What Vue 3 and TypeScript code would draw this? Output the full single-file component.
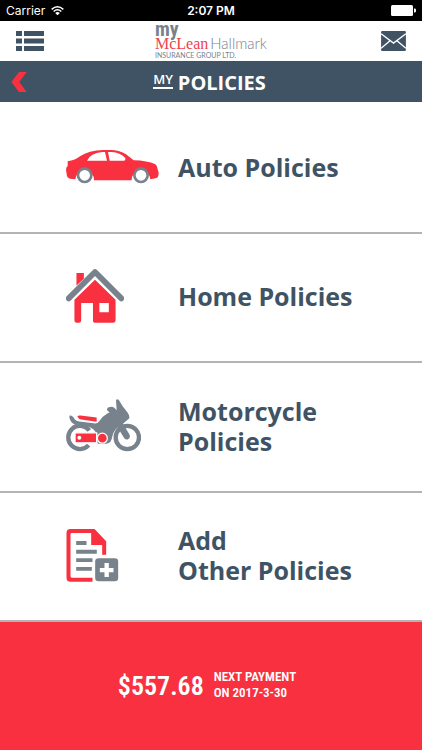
<script setup lang="ts">
type PolicyKind = 'auto' | 'home' | 'motorcycle' | 'add'

interface Policy {
  kind: PolicyKind
  label: string
}

const policies: Policy[] = [
  { kind: 'auto', label: 'Auto Policies' },
  { kind: 'home', label: 'Home Policies' },
  { kind: 'motorcycle', label: 'Motorcycle\nPolicies' },
  { kind: 'add', label: 'Add\nOther Policies' },
]
</script>

<template>
  <div class="screen">
    <div class="status">
      <div class="carrier">
        <span>Carrier</span>
        <svg class="wifi" viewBox="0 0 39 30" aria-hidden="true">
          <path d="M2 10Q19.500-5 37 10" fill="none" stroke="#fff" stroke-width="4.500" />
          <path d="M8 16.500Q19.500 6.500 31 16.500" fill="none" stroke="#fff" stroke-width="4.500" />
          <path d="M12.500 21Q19.500 14.500 26.500 21L19.500 28Z" fill="#fff" />
        </svg>
      </div>
      <span class="clock">2:07 PM</span>
      <svg class="battery" viewBox="0 0 25 11" aria-hidden="true">
        <rect x="0" y="0" width="22" height="11" rx="1.500" fill="#fff" />
        <path d="M23 3.500h1q1 0 1 2t-1 2h-1z" fill="#fff" />
      </svg>
    </div>

    <header class="header">
      <button class="icon-button" type="button" aria-label="Menu">
        <svg class="menu" viewBox="0 0 28 20" aria-hidden="true">
          <path d="M0 0h6v5H0zM8 0h20v5H8zM0 7.500h6v5H0zM8 7.500h20v5H8zM0 15h6v5H0zM8 15h20v5H8z" fill="#405364" />
        </svg>
      </button>
      <div class="logo">
        <span class="logo-my">my</span>
        <span class="logo-name"><span class="logo-red">McLean</span><span class="logo-grey">Hallmark</span></span>
        <span class="logo-sub">INSURANCE GROUP LTD.</span>
      </div>
      <button class="icon-button" type="button" aria-label="Messages">
        <svg class="mail" viewBox="0 0 72 58" aria-hidden="true">
          <rect width="72" height="58" rx="3" fill="#405364" />
          <path d="M0 8L36 35L72 8M0 50L26 28M72 50L46 28" fill="none" stroke="#fff" stroke-width="4" />
        </svg>
      </button>
    </header>

    <div class="title-bar">
      <button class="back" type="button" aria-label="Back">
        <svg viewBox="0 0 46 60" aria-hidden="true">
          <path d="M23 0H46L24 30L46 60H23L0 30Z" fill="#f8303f" />
        </svg>
      </button>
      <h1 class="title"><span class="title-my">MY</span><span>POLICIES</span></h1>
    </div>

    <main class="policies">
      <button v-for="policy in policies" :key="policy.kind" class="policy" type="button">
        <span class="policy-icon">
          <svg v-if="policy.kind === 'auto'" class="car" viewBox="0 0 279 102" aria-hidden="true">
            <path d="M5 34Q28 31 42 19Q68 1 112 0H134Q158 0 179 12L203 31Q244 32 268 43Q275 48 275 58L278 68Q278 83 269 85L253 88A28 28 0 0 0 197 91H84A28 28 0 0 0 28 88L12 86Q2 83 2 72L0 59Q0 52 5 48Z" fill="#f8303f" />
            <path d="M63 32Q73 9 109 6H117L123 32ZM126 6H137Q162 7 178 24Q180 29 175 32H131Z" fill="#fff" />
            <g fill="#fff" stroke="#78828c" stroke-width="8">
              <circle cx="56" cy="76" r="20" />
              <circle cx="225" cy="76" r="20" />
            </g>
          </svg>
          <svg v-else-if="policy.kind === 'home'" class="house" viewBox="0 0 172 160" aria-hidden="true">
            <path d="M31 12H53V29L31 49ZM25 91L86 32L147 91V153Q147 159 141 159H85Q80 159 80 154V101H45V153Q45 159 39 159H31Q25 159 25 153ZM99 101V128H127V101Z" fill="#f8303f" fill-rule="evenodd" />
            <path d="M8 87L86 9L164 87" fill="none" stroke="#78828c" stroke-width="17" stroke-linecap="round" stroke-linejoin="round" />
          </svg>
          <svg v-else-if="policy.kind === 'motorcycle'" class="motorcycle" viewBox="0 0 225 158" aria-hidden="true">
            <g fill="none" stroke="#78828c" stroke-width="13">
              <path d="M70 94A35 35 0 1 0 68 138" />
              <circle cx="184" cy="115" r="35" />
            </g>
            <path d="M11 49Q19 47 26 60Q30 66 40 67L88 73Q96 73 101 65Q108 52 124 43L131 39Q122 37 123 30Q125 23 138 23Q145 24 152 33L150 3Q153-2 159 3L170 21L184 39Q191 48 190 57L171 74L190 105Q195 117 185 121Q176 123 172 113L155 85Q143 94 139 111Q137 131 121 134H95L88 97Q76 80 47 78Q25 80 15 67Q8 58 11 49Z" fill="#78828c" />
            <path d="M34 52Q37 48 43 49L92 55V68L46 61Q38 60 34 52Z" fill="#f8303f" />
            <path d="M27 103Q27 101 29 101H92V131H29Q27 131 27 129Z" fill="#f8303f" stroke="#fff" stroke-width="4" />
            <circle cx="40" cy="116" r="6" fill="#fff" />
            <circle cx="109" cy="117" r="15" fill="#f8303f" stroke="#fff" stroke-width="4" />
          </svg>
          <svg v-else class="document" viewBox="0 0 156 159" aria-hidden="true">
            <path d="M12 0H84L119 37V77H107V48H74V12H16Q12 12 12 16V142Q12 146 16 146H78V158H12Q0 158 0 146V12Q0 0 12 0Z" fill="#f8303f" />
            <path d="M29 36H60V48H29ZM29 62H91V74H29ZM29 88H78V99H29ZM29 114H76V125H29Z" fill="#78828c" />
            <rect x="86" y="88" width="69" height="69" rx="10" fill="#78828c" />
            <path d="M114 102H127V117H141V130H127V144H114V130H100V117H114Z" fill="#fff" />
          </svg>
        </span>
        <span class="policy-name">{{ policy.label }}</span>
      </button>
    </main>

    <footer class="payment">
      <strong class="amount">$557.68</strong>
      <p class="due"><span>NEXT PAYMENT</span><span>ON 2017-3-30</span></p>
    </footer>
  </div>
</template>

<style>
body {
  margin: 0;
  background: #fff;
}
</style>

<style scoped>
.screen {
  display: flex;
  flex-direction: column;
  min-height: 100vh;
  font-family: "Open Sans", sans-serif;
  color: #405364;
}

svg {
  display: block;
}

button {
  margin: 0;
  padding: 0;
  border: 0;
  background: none;
  color: inherit;
  font: inherit;
  cursor: pointer;
}

.status {
  display: grid;
  grid-template-columns: 1fr auto 1fr;
  align-items: center;
  height: 21px;
  padding: 0 6px;
  background: #000;
  color: #fff;
  font: 12px/21px Inter, sans-serif;
}

.carrier {
  display: flex;
  align-items: center;
  gap: 6px;
}

.wifi {
  width: 13px;
  height: 10px;
}

.clock {
  font-weight: 600;
}

.battery {
  justify-self: end;
  width: 25px;
  height: 11px;
}

.header {
  display: grid;
  grid-template-columns: 1fr auto 1fr;
  align-items: center;
  height: 40px;
  padding: 0 16px;
  background: #fff;
}

.icon-button {
  justify-self: start;
}

.icon-button:last-child {
  justify-self: end;
}

.menu {
  width: 28px;
  height: 20px;
}

.mail {
  width: 25px;
  height: 20px;
}

.logo {
  display: flex;
  flex-direction: column;
}

.logo-my {
  color: #78828c;
  font: 700 20px/13px "Roboto Condensed", "Liberation Sans Narrow", Roboto, sans-serif;
}

.logo-name {
  display: flex;
  align-items: baseline;
  gap: 2px;
  line-height: 15px;
}

.logo-red {
  color: #ee4350;
  font: 16px/15px "Liberation Serif", serif;
}

.logo-grey {
  color: #78828c;
  font: 300 15px/15px Lato, sans-serif;
}

.logo-sub {
  color: #78828c;
  font: 7px/9px Lato, sans-serif;
}

.title-bar {
  display: grid;
  grid-template-columns: 1fr auto 1fr;
  align-items: center;
  height: 41px;
  padding: 0 14px 0 11px;
  background: #405364;
  color: #fff;
}

.back {
  justify-self: start;
}

.back svg {
  width: 16px;
  height: 20px;
}

.title {
  display: flex;
  align-items: center;
  gap: 5px;
  margin: 0;
  padding-top: 2px;
  font-size: 20px;
  font-weight: 700;
  line-height: 28px;
}

.title-my {
  margin-bottom: 4px;
  border-bottom: 2px solid #fff;
  font-size: 13px;
  font-weight: 600;
  line-height: 15px;
}

.policies {
  display: grid;
  flex: 1;
  grid-auto-rows: 1fr;
  padding-top: 2px;
}

.policy {
  display: grid;
  grid-template-columns: 112px 1fr;
  align-items: center;
  min-height: 100px;
  padding: 0 16px 2px 66px;
  border-bottom: 2px solid #b4b4b6;
  text-align: left;
}

.policy-name {
  font-size: 25px;
  font-weight: 700;
  line-height: 30px;
  white-space: pre-line;
}

.car {
  width: 93px;
  height: 34px;
}

.house {
  width: 58px;
  height: 54px;
}

.motorcycle {
  width: 75px;
  height: 53px;
}

.document {
  width: 53px;
  height: 53px;
}

.payment {
  display: flex;
  align-items: center;
  justify-content: center;
  gap: 10px;
  height: 128px;
  padding-right: 8px;
  box-sizing: border-box;
  background: #f8303f;
  color: #fff;
  font-family: "Liberation Sans Narrow", "Roboto Condensed", sans-serif;
  font-weight: 600;
}

.amount {
  font-size: 26px;
  font-weight: 600;
  line-height: 30px;
}

.due {
  display: flex;
  flex-direction: column;
  margin: 0 0 2px;
  font-size: 13px;
  line-height: 16px;
}
</style>
